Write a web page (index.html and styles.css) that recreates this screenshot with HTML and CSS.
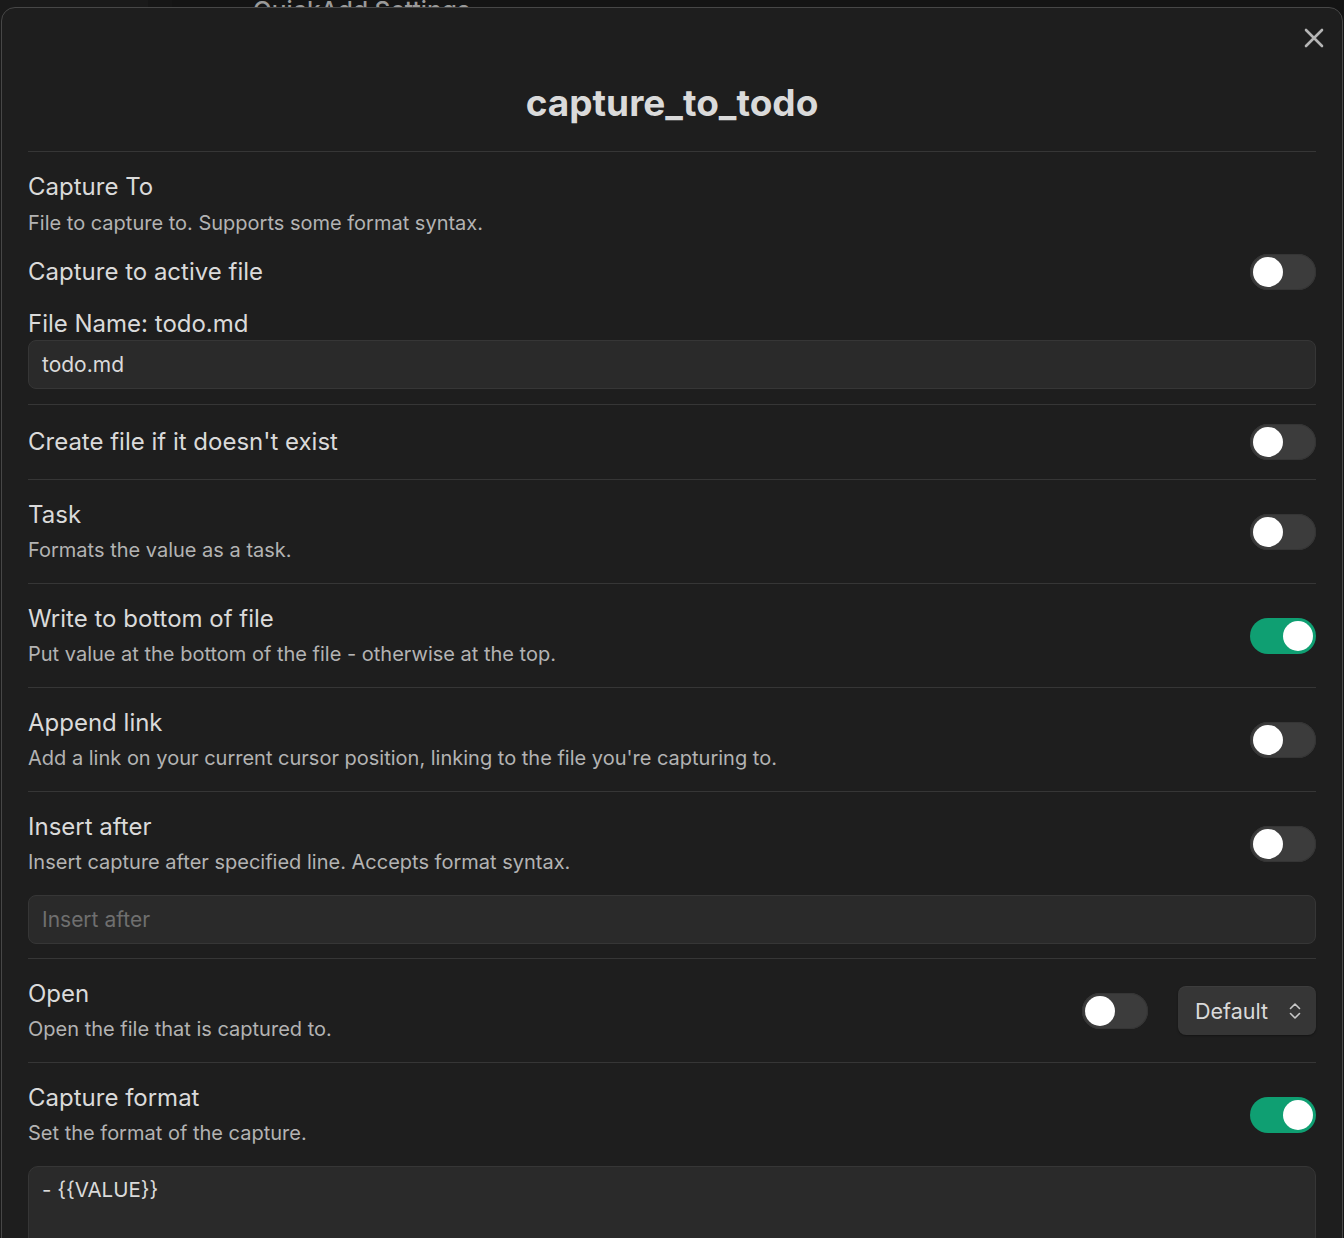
FILE: index.html
```html
<!DOCTYPE html>
<html lang="en">
<head>
<meta charset="utf-8">
<title>capture_to_todo</title>
<link rel="stylesheet" href="styles.css">
</head>
<body>
<div class="app">
  <div class="sidebar"></div>
  <div class="gutter"></div>
  <div class="main">
    <div class="main-title">QuickAdd Settings</div>
  </div>
</div>

<div class="modal">
  <button class="close" aria-label="Close">
    <svg width="20" height="20" viewBox="0 0 20 20"><path d="M2 2 L18 18 M18 2 L2 18" stroke="#b5b5b5" stroke-width="2.6" stroke-linecap="round" fill="none"/></svg>
  </button>
  <h2 class="modal-title">capture_to_todo</h2>

  <div class="settings">
    <div class="section-head">
      <div class="name">Capture To</div>
      <div class="desc">File to capture to. Supports some format syntax.</div>
    </div>

    <div class="row plain">
      <div class="info"><div class="name">Capture to active file</div></div>
      <div class="control"><span class="toggle"></span></div>
    </div>

    <div class="field-label">File Name: todo.md</div>
    <div class="text-input first">todo.md</div>

    <div class="row">
      <div class="info"><div class="name">Create file if it doesn't exist</div></div>
      <div class="control"><span class="toggle"></span></div>
    </div>

    <div class="row">
      <div class="info">
        <div class="name">Task</div>
        <div class="desc">Formats the value as a task.</div>
      </div>
      <div class="control"><span class="toggle"></span></div>
    </div>

    <div class="row">
      <div class="info">
        <div class="name">Write to bottom of file</div>
        <div class="desc">Put value at the bottom of the file - otherwise at the top.</div>
      </div>
      <div class="control"><span class="toggle on"></span></div>
    </div>

    <div class="row">
      <div class="info">
        <div class="name">Append link</div>
        <div class="desc">Add a link on your current cursor position, linking to the file you're capturing to.</div>
      </div>
      <div class="control"><span class="toggle"></span></div>
    </div>

    <div class="row">
      <div class="info">
        <div class="name">Insert after</div>
        <div class="desc">Insert capture after specified line. Accepts format syntax.</div>
      </div>
      <div class="control"><span class="toggle"></span></div>
    </div>
    <div class="text-input placeholder">Insert after</div>

    <div class="row">
      <div class="info">
        <div class="name">Open</div>
        <div class="desc">Open the file that is captured to.</div>
      </div>
      <div class="control">
        <span class="toggle"></span>
        <div class="select">
          <span>Default</span>
          <svg width="14" height="20" viewBox="0 0 14 20"><path d="M2.5 7.5 L7 3 L11.5 7.5 M2.5 12.5 L7 17 L11.5 12.5" stroke="#c8c8c8" stroke-width="1.6" fill="none" stroke-linecap="round" stroke-linejoin="round"/></svg>
        </div>
      </div>
    </div>

    <div class="row">
      <div class="info">
        <div class="name">Capture format</div>
        <div class="desc">Set the format of the capture.</div>
      </div>
      <div class="control"><span class="toggle on"></span></div>
    </div>
    <div class="textarea">- {{VALUE}}</div>
  </div>
</div>
</body>
</html>
```

FILE: styles.css
```css
html, body {
  margin: 0;
  height: 100%;
  overflow: hidden;
}
body {
  background: #141414;
  font-family: Inter, "Noto Sans", "Liberation Sans", sans-serif;
  color: #dadada;
  position: relative;
}
.app {
  display: flex;
  height: 100%;
}
.sidebar {
  width: 148px;
  background: #1a1a1a;
}
.gutter {
  width: 24px;
  background: #161616;
}
.main {
  flex: 1;
  background: #141414;
}
.main-title {
  margin: -5px 0 0 81px;
  font-size: 24.5px;
  font-weight: 500;
  color: #9a9a9a;
  line-height: 30px;
}

.modal {
  position: absolute;
  left: 1px;
  top: 7px;
  width: 1342px;
  bottom: -40px;
  box-sizing: border-box;
  background: #1e1e1e;
  border: 1px solid #474747;
  border-radius: 14px;
  padding: 0 26px;
}
.close {
  position: absolute;
  top: 18px;
  right: 16px;
  width: 24px;
  height: 24px;
  padding: 0;
  border: 0;
  background: none;
  display: flex;
  align-items: center;
  justify-content: center;
}
.modal-title {
  margin: 0;
  padding: 95px 0 22px;
  height: 0;
  line-height: 0;
  text-align: center;
  font-size: 37px;
  font-weight: 700;
  color: #dadada;
  box-sizing: content-box;
}
.settings {
  border-top: 1px solid #363636;
  margin-top: 26px;
}

.name {
  font-size: 24px;
  line-height: 32px;
  color: #dadada;
}
.desc {
  font-size: 20px;
  line-height: 30px;
  color: #b3b3b3;
  margin-top: 5px;
}
.section-head {
  padding-top: 19px;
}
.row {
  display: flex;
  align-items: center;
  justify-content: space-between;
  border-top: 1px solid #363636;
  padding: 18px 0;
  min-height: 38px;
}
.row .name {
  line-height: 34px;
}
.row .desc {
  line-height: 29px;
  margin-top: 4px;
}
.row.plain {
  border-top: 0;
  padding: 16px 0 18px;
  min-height: 36px;
}
.row.plain .name {
  line-height: 32px;
}
.control {
  display: flex;
  align-items: center;
  gap: 30px;
}
.toggle {
  display: block;
  position: relative;
  width: 66px;
  height: 36px;
  border-radius: 18px;
  background: #3c3c3c;
  box-shadow: inset 0 0 0 1px #353535;
}
.toggle::after {
  content: "";
  position: absolute;
  top: 3px;
  left: 3px;
  width: 30px;
  height: 30px;
  border-radius: 50%;
  background: #fff;
}
.toggle.on {
  background: #0f9f72;
  box-shadow: none;
}
.toggle.on::after {
  left: 33px;
}
.field-label {
  font-size: 24px;
  line-height: 32px;
  color: #dadada;
}
.text-input {
  box-sizing: border-box;
  height: 49px;
  margin-bottom: 14px;
  padding: 0 13px;
  display: flex;
  align-items: center;
  background: #2a2a2a;
  border: 1px solid #363636;
  border-radius: 8px;
  font-size: 21px;
  color: #dadada;
}
.text-input.first {
  margin-bottom: 15px;
}
.text-input.placeholder {
  color: #6f6f6f;
}
.select {
  box-sizing: border-box;
  width: 138px;
  height: 49px;
  padding: 0 14px 0 17px;
  display: flex;
  align-items: center;
  justify-content: space-between;
  background: #363636;
  border-radius: 8px;
  box-shadow: 0 1px 2px rgba(0,0,0,0.35), inset 0 1px 0 rgba(255,255,255,0.04);
  font-size: 21.5px;
  color: #dadada;
}
.textarea {
  box-sizing: border-box;
  height: 200px;
  padding: 10px 13px;
  background: #2a2a2a;
  border: 1px solid #363636;
  border-radius: 10px;
  font-size: 20.5px;
  line-height: 26px;
  color: #dadada;
}
```
